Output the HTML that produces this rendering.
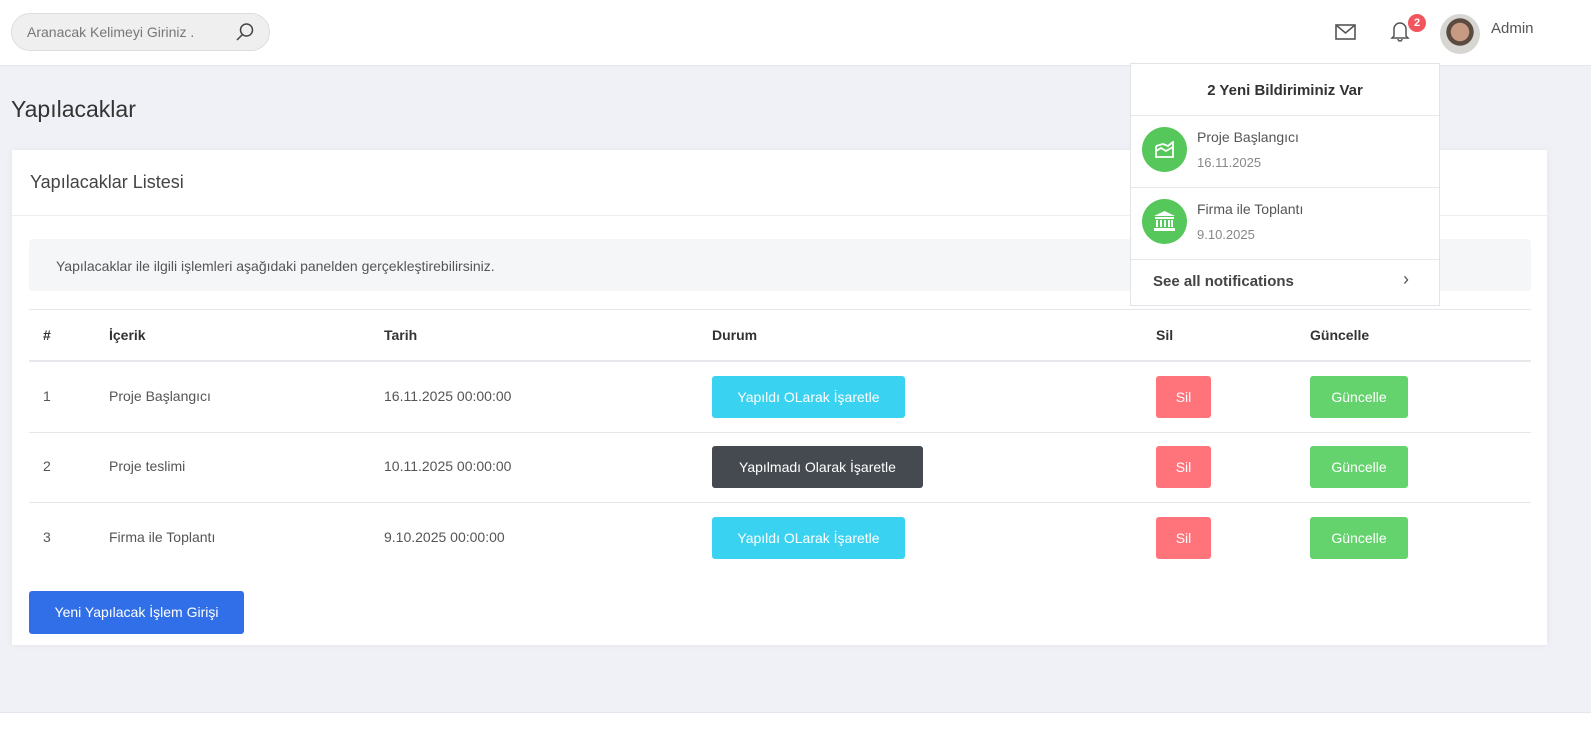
<!DOCTYPE html>
<html><head><meta charset="utf-8"><style>
*{box-sizing:border-box;margin:0;padding:0}
body{width:1591px;height:743px;background:#f0f1f6;font-family:"Liberation Sans",sans-serif;color:#4a4a4a;position:relative;overflow:hidden}
.top{position:absolute;left:0;top:0;width:1591px;height:66px;background:#fff;border-bottom:1px solid #e4e6ee}
.search{position:absolute;left:11px;top:13px;width:259px;height:38px;border:1px solid #ddd;background:#efefef;border-radius:19px;font-size:14px;color:#777;padding:10px 0 0 15px}
.title{position:absolute;left:11px;top:96px;font-size:23px;color:#333}
.card{position:absolute;left:12px;top:150px;width:1535px;height:495px;background:#fff;box-shadow:0 0 8px rgba(0,0,0,.05)}
.ch{height:66px;border-bottom:1px solid #eceef2;font-size:18px;padding:22px 0 0 18px;color:#444}
.alert{position:absolute;left:17px;top:89px;width:1502px;height:52px;background:#f5f6f8;border-radius:4px;font-size:14px;padding:19px 0 0 27px;color:#555}
.line{position:absolute;left:17px;width:1502px;height:1px;background:#e6e7ea}
.t{position:absolute;font-size:14px;color:#555}
.h{font-weight:bold;color:#333}
.b{position:absolute;height:42px;border-radius:3px;color:#fff;font-size:14px;text-align:center;line-height:42px}
.cy{background:#39d2f0;width:193px}.dk{background:#454a50;width:211px}.rd{background:#ff737b;width:55px}.gr{background:#65d36d;width:98px}
.dd{position:absolute;left:1130px;top:63px;width:310px;height:243px;background:#fff;border:1px solid #e2e3e6}
.ic{position:absolute;left:11px;width:45px;height:45px;border-radius:50%;background:#56c75a}
footer{position:absolute;left:0;top:712px;width:1591px;height:31px;background:#fff;border-top:1px solid #e4e6ee}
</style></head><body>
<div class="top">
<div class="search">Aranacak Kelimeyi Giriniz .
<svg style="position:absolute;left:223px;top:8px" width="20" height="20" viewBox="0 0 20 20" fill="none" stroke="#444" stroke-width="1.5"><circle cx="11.5" cy="8" r="6"/><path d="M7.5 12.5L2 18"/></svg></div>
<svg style="position:absolute;left:1335px;top:24px" width="21" height="16" viewBox="0 0 21 16" fill="none" stroke="#555" stroke-width="1.6"><rect x="1" y="1" width="19" height="14"/><path d="M1 1l9.5 8L20 1"/></svg>
<svg style="position:absolute;left:1390px;top:20px" width="20" height="22" viewBox="0 0 20 22" fill="none" stroke="#555" stroke-width="1.5"><path d="M4 16V9a6 6 0 0 1 12 0v7l2 2H2z"/><path d="M8 19a2 2 0 0 0 4 0"/></svg>
<div style="position:absolute;left:1408px;top:14px;width:18px;height:18px;border-radius:50%;background:#f2555e;color:#fff;font-size:11px;font-weight:bold;text-align:center;line-height:18px">2</div>
<div style="position:absolute;left:1440px;top:14px;width:40px;height:40px;border-radius:50%;background:radial-gradient(circle at 50% 45%,#c79a83 0 30%,#5b4a40 32% 45%,#d8d6d2 47%)"></div>
<div style="position:absolute;left:1491px;top:20px;font-size:15px;color:#555">Admin</div>
</div>
<div class="title">Yapılacaklar</div>
<div class="card">
<div class="ch">Yapılacaklar Listesi</div>
<div class="alert">Yapılacaklar ile ilgili işlemleri aşağıdaki panelden gerçekleştirebilirsiniz.</div>
<div class="line" style="top:159px"></div>
<div class="line" style="top:210px;height:2px"></div>
<div class="line" style="top:282px"></div>
<div class="line" style="top:352px"></div>
<div class="t h" style="left:31px;top:177px">#</div><div class="t h" style="left:97px;top:177px">İçerik</div><div class="t h" style="left:372px;top:177px">Tarih</div><div class="t h" style="left:700px;top:177px">Durum</div><div class="t h" style="left:1144px;top:177px">Sil</div><div class="t h" style="left:1298px;top:177px">Güncelle</div>
<div class="t" style="left:31px;top:238px">1</div><div class="t" style="left:97px;top:238px">Proje Başlangıcı</div><div class="t" style="left:372px;top:238px">16.11.2025 00:00:00</div>
<div class="b cy" style="left:700px;top:226px">Yapıldı OLarak İşaretle</div><div class="b rd" style="left:1144px;top:226px">Sil</div><div class="b gr" style="left:1298px;top:226px">Güncelle</div>
<div class="t" style="left:31px;top:308px">2</div><div class="t" style="left:97px;top:308px">Proje teslimi</div><div class="t" style="left:372px;top:308px">10.11.2025 00:00:00</div>
<div class="b dk" style="left:700px;top:296px">Yapılmadı Olarak İşaretle</div><div class="b rd" style="left:1144px;top:296px">Sil</div><div class="b gr" style="left:1298px;top:296px">Güncelle</div>
<div class="t" style="left:31px;top:379px">3</div><div class="t" style="left:97px;top:379px">Firma ile Toplantı</div><div class="t" style="left:372px;top:379px">9.10.2025 00:00:00</div>
<div class="b cy" style="left:700px;top:367px">Yapıldı OLarak İşaretle</div><div class="b rd" style="left:1144px;top:367px">Sil</div><div class="b gr" style="left:1298px;top:367px">Güncelle</div>
<div class="b" style="left:17px;top:441px;width:215px;height:43px;background:#316fe8">Yeni Yapılacak İşlem Girişi</div>
</div>
<div class="dd">
<div style="height:52px;border-bottom:1px solid #e6e7ea;text-align:center;font-weight:bold;font-size:15px;color:#333;padding-top:18px">2 Yeni Bildiriminiz Var</div>
<div style="position:relative;height:72px;border-bottom:1px solid #e6e7ea"><div class="ic" style="top:11px"><svg style="margin:14px 0 0 13px" width="19" height="17" viewBox="0 0 19 17" fill="none" stroke="#fff" stroke-width="1.8"><path d="M1 5v11h17V1L13 5 8 3 1 5"/><path d="M1 10l5-3 5 3 7-4"/></svg></div><div class="t" style="left:66px;top:13px">Proje Başlangıcı</div><div class="t" style="left:66px;top:39px;font-size:13px;color:#888">16.11.2025</div></div>
<div style="position:relative;height:72px;border-bottom:1px solid #e6e7ea"><div class="ic" style="top:11px"><svg style="margin:12px 0 0 12px" width="21" height="20" viewBox="0 0 21 20" fill="#fff"><path d="M10.5 0L21 5H0z"/><rect x="1" y="6" width="19" height="2"/><rect x="2" y="9" width="2" height="7"/><rect x="6" y="9" width="2" height="7"/><rect x="10" y="9" width="2" height="7"/><rect x="14" y="9" width="2" height="7"/><rect x="17" y="9" width="2" height="7"/><rect x="0" y="17" width="21" height="3"/></svg></div><div class="t" style="left:66px;top:13px">Firma ile Toplantı</div><div class="t" style="left:66px;top:39px;font-size:13px;color:#888">9.10.2025</div></div>
<div style="position:relative;height:46px"><div class="t h" style="left:22px;top:13px;font-size:15px;color:#444">See all notifications</div><div class="t" style="left:272px;top:9px;font-size:18px">&#8250;</div></div>
</div>
<footer></footer>
</body></html>
